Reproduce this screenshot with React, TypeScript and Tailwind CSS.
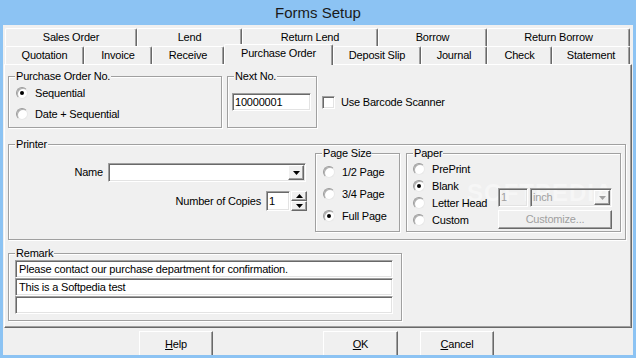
import type { ReactNode } from "react";

const sunken =
  "border border-t-[#a0a0a0] border-l-[#a0a0a0] border-b-white border-r-white shadow-[inset_1px_1px_0_#696969,inset_-1px_-1px_0_#e3e3e3]";
const raised =
  "border border-t-white border-l-white border-b-[#696969] border-r-[#696969] shadow-[inset_-1px_-1px_0_#a0a0a0]";

function Group({ label, className, children }: { label: string; className: string; children?: ReactNode }) {
  return (
    <div className={"relative border border-[#a0a0a0] shadow-[inset_1px_1px_0_#fff,1px_1px_0_#fff] " + className}>
      <span className="absolute -top-[7px] left-[6px] bg-[#f0f0f0] px-[1px] leading-[13px]">{label}</span>
      {children}
    </div>
  );
}

function Radio({ label, checked }: { label: string; checked?: boolean }) {
  return (
    <div className="flex h-[16px] items-center gap-[7px]">
      <span className="flex h-[12px] w-[12px] items-center justify-center rounded-full border border-[#9a9a9a] border-b-[#e8e8e8] border-r-[#e8e8e8] bg-white shadow-[inset_1px_1px_0_#b0b0b0]">
        {checked ? <span className="h-[4px] w-[4px] rounded-full bg-black" /> : null}
      </span>
      <span className="leading-[13px]">{label}</span>
    </div>
  );
}

function Arrow({ up, grey }: { up?: boolean; grey?: boolean }) {
  return (
    <svg width="7" height="4" viewBox="0 0 7 4">
      <path d={up ? "M3.5 0 L7 4 L0 4 Z" : "M0 0 L7 0 L3.5 4 Z"} fill={grey ? "#a0a0a0" : "#000"} />
    </svg>
  );
}

function Tab({ label, w, active }: { label: string; w: string; active?: boolean }) {
  if (active) {
    return (
      <div
        className={
          "relative z-10 -mb-[1px] flex h-[21px] items-center justify-center rounded-t-[2px] border-l border-t border-white border-r border-r-[#696969] bg-[#f0f0f0] pb-[3px] shadow-[inset_-1px_0_0_#a0a0a0] " +
          w
        }
      >
        {label}
      </div>
    );
  }
  return (
    <div
      className={
        "flex h-[18px] items-center justify-center rounded-t-[2px] border-l border-t border-white border-r border-r-[#696969] shadow-[inset_-1px_0_0_#a0a0a0] " +
        w
      }
    >
      {label}
    </div>
  );
}

export default function App() {
  return (
    <div className="flex h-[358px] w-[636px] flex-col overflow-hidden bg-[#8cc3f3] font-['Liberation_Sans',Arial,sans-serif] text-[11px] leading-[13px] tracking-[-0.2px] text-black">
      <div className="flex h-[25px] items-center justify-center text-[15px] tracking-normal text-[#1a1a1a]">Forms Setup</div>

      <div className="mx-[3px] flex h-[330px] flex-col overflow-hidden bg-[#f0f0f0]">
        {/* tab rows */}
        <div className="ml-[2px] pt-[3px]">
          <div className="flex h-[18px]">
            <Tab label="Sales Order" w="w-[132px]" />
            <Tab label="Lend" w="w-[105px]" />
            <Tab label="Return Lend" w="w-[136px]" />
            <Tab label="Borrow" w="w-[109px]" />
            <Tab label="Return Borrow" w="w-[143px]" />
          </div>
          <div className="flex h-[18px] items-end">
            <Tab label="Quotation" w="w-[79px]" />
            <Tab label="Invoice" w="w-[68px]" />
            <Tab label="Receive" w="w-[72px]" />
            <Tab label="Purchase Order" w="w-[109px]" active />
            <Tab label="Deposit Slip" w="w-[88px]" />
            <Tab label="Journal" w="w-[66px]" />
            <Tab label="Check" w="w-[65px]" />
            <Tab label="Statement" w="w-[78px]" />
          </div>
        </div>

        {/* tab page */}
        <div className="ml-[1px] flex h-[264px] w-[628px] shrink-0 flex-col border border-white border-b-[#696969] border-r-[#696969] pl-[3px] shadow-[inset_-1px_-1px_0_#a0a0a0]">
          <div className="mt-[11px] flex items-start">
            <Group label="Purchase Order No." className="h-[52px] w-[214px]">
              <div className="flex flex-col gap-[5px] pl-[7px] pt-[8px]">
                <Radio label="Sequential" checked />
                <Radio label="Date + Sequential" />
              </div>
            </Group>
            <Group label="Next No." className="ml-[5px] h-[52px] w-[90px]">
              <div className="pl-[4px] pt-[16px]">
                <div className={"flex h-[18px] w-[79px] items-center bg-white px-[2px] " + sunken}>10000001</div>
              </div>
            </Group>
            <div className="ml-[5px] mt-[20px] flex items-center gap-[6px]">
              <span className={"h-[13px] w-[13px] bg-white " + sunken} />
              <span>Use Barcode Scanner</span>
            </div>
          </div>

          <Group label="Printer" className="mt-[16px] h-[96px] w-[618px]">
            <div className="flex">
              <div className="flex w-[298px] flex-col items-end pt-[18px]">
                <div className="mr-[1px] flex items-center gap-[5px]">
                  <span>Name</span>
                  <div className={"flex h-[19px] w-[198px] items-center justify-end bg-white pr-[1px] " + sunken}>
                    <span className={"flex h-[15px] w-[16px] items-center justify-center bg-[#f0f0f0] " + raised}>
                      <Arrow />
                    </span>
                  </div>
                </div>
                <div className="mt-[9px] flex items-center">
                  <span className="mr-[5px]">Number of Copies</span>
                  <div className={"flex h-[20px] w-[24px] items-center bg-white px-[2px] " + sunken}>1</div>
                  <div className="ml-[1px] flex h-[20px] w-[16px] flex-col">
                    <span className={"flex h-[10px] items-center justify-center " + raised}>
                      <Arrow up />
                    </span>
                    <span className={"flex h-[10px] items-center justify-center " + raised}>
                      <Arrow />
                    </span>
                  </div>
                </div>
              </div>

              <Group label="Page Size" className="ml-[8px] mt-[8px] h-[79px] w-[85px]">
                <div className="flex flex-col gap-[6px] pl-[7px] pt-[10px]">
                  <Radio label="1/2 Page" />
                  <Radio label="3/4 Page" />
                  <Radio label="Full Page" checked />
                </div>
              </Group>

              <Group label="Paper" className="ml-[6px] mt-[8px] h-[79px] w-[215px]">
                <span className="pointer-events-none absolute left-[60px] top-[27px] text-[24px] font-bold leading-[24px] tracking-[1px] text-white opacity-40">
                  SOFTPEDIA
                </span>
                <div className="relative flex pl-[6px] pt-[7px]">
                  <div className="flex w-[85px] flex-col gap-[1px]">
                    <Radio label="PrePrint" />
                    <Radio label="Blank" checked />
                    <Radio label="Letter Head" />
                    <Radio label="Custom" />
                  </div>
                  <div className="mt-[27px] flex flex-col text-[#a0a0a0]">
                    <div className="flex gap-[2px]">
                      <div className={"flex h-[19px] w-[30px] items-center px-[2px] " + sunken}>1</div>
                      <div className={"flex h-[19px] w-[82px] items-center justify-between pl-[2px] pr-[1px] " + sunken}>
                        <span>inch</span>
                        <span className={"flex h-[15px] w-[16px] items-center justify-center " + raised}>
                          <Arrow grey />
                        </span>
                      </div>
                    </div>
                    <div className={"mt-[3px] flex h-[19px] w-[114px] items-center justify-center " + raised}>Customize...</div>
                  </div>
                </div>
              </Group>
            </div>
          </Group>

          <Group label="Remark" className="mt-[13px] h-[68px] w-[394px]">
            <div className="flex flex-col pl-[6px] pt-[6px]">
              <div className={"flex h-[18px] w-[378px] items-center bg-white px-[3px] " + sunken}>
                Please contact our purchase department for confirmation.
              </div>
              <div className={"flex h-[18px] w-[378px] items-center bg-white px-[3px] " + sunken}>This is a Softpedia test</div>
              <div className={"h-[18px] w-[378px] bg-white " + sunken} />
            </div>
          </Group>
        </div>

        {/* buttons */}
        <div className="flex pt-[3px]">
          <div className={"ml-[136px] flex h-[26px] w-[74px] items-center justify-center " + raised}>
            <span>
              <u>H</u>elp
            </span>
          </div>
          <div className={"ml-[110px] flex h-[26px] w-[75px] items-center justify-center " + raised}>
            <span>
              <u>O</u>K
            </span>
          </div>
          <div className={"ml-[22px] flex h-[26px] w-[74px] items-center justify-center " + raised}>
            <span>
              <u>C</u>ancel
            </span>
          </div>
        </div>
      </div>
    </div>
  );
}
